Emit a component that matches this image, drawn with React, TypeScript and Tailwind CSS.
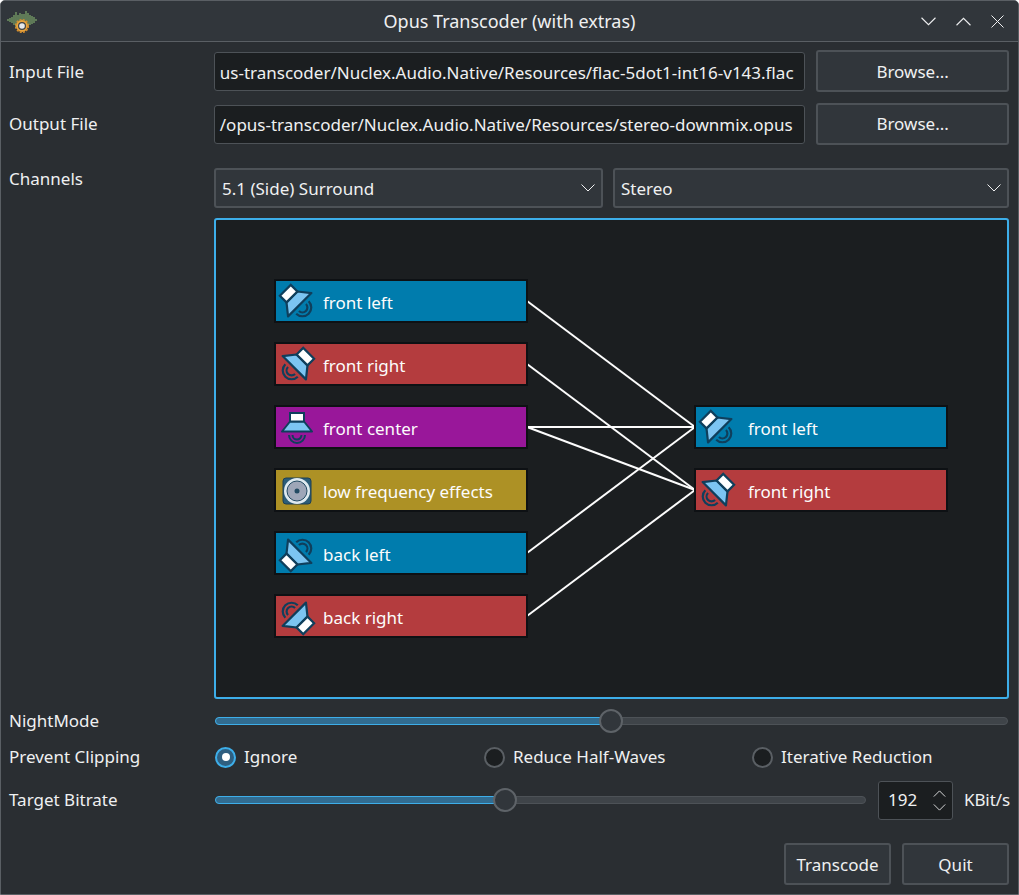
import type { ReactNode } from "react";

const font = "font-['Noto_Sans',sans-serif]";

function AppIcon() {
  const bars = [
    [1, 1], [3, 2], [5, 3], [7, 5], [9, 8], [11, 5], [13, 7], [15, 6], [17, 6], [19, 9],
    [21, 7], [23, 5], [25, 4], [27, 3], [29, 1],
  ];
  return (
    <svg width="30" height="26" viewBox="0 0 30 26">
      {bars.map(([x, h]) => (
        <line key={x} x1={x} y1={11 - h} x2={x} y2={11 + h} stroke="#7fa86c" strokeWidth="1.2" />
      ))}
      <circle cx="15" cy="17" r="5" fill="#3c4248" stroke="#e8a33c" strokeWidth="2" />
      <circle cx="15" cy="17" r="6.4" fill="none" stroke="#d58d2c" strokeWidth="1.4" strokeDasharray="2 1.35" />
      <circle cx="15" cy="17" r="2.8" fill="#e6e8ea" />
    </svg>
  );
}

function Chevron({ className, up }: { className?: string; up?: boolean }) {
  return (
    <svg viewBox="0 0 14 8" className={className} fill="none" stroke="#eff0f1" strokeWidth="1">
      <path d={up ? "M0.5 7.5 L7 1 L13.5 7.5" : "M0.5 0.5 L7 7 L13.5 0.5"} />
    </svg>
  );
}

function Button({ children, className }: { children: ReactNode; className: string }) {
  return (
    <button className={`h-[42px] rounded-[3px] border-2 border-[#4d5257] bg-[#31363b] text-[#eff0f1] ${className}`}>
      {children}
    </button>
  );
}

function TextBox({ value, className }: { value: string; className: string }) {
  return (
    <div className={`h-[39px] w-[592px] overflow-hidden whitespace-nowrap rounded-[3px] border border-[#4d5257] bg-[#1b1e20] pl-[5px] text-[#eff0f1] ${className}`}>
      {value}
    </div>
  );
}

function Combo({ label, className }: { label: string; className: string }) {
  return (
    <div className={`flex h-[40px] items-center justify-between rounded-[3px] border-2 border-[#4d5257] bg-[#31363b] pl-[6px] pr-[6px] text-[#eff0f1] ${className}`}>
      <span className="pt-[2px]">{label}</span>
      <Chevron className="h-[8px] w-[14px]" />
    </div>
  );
}

function Slider({ percent, className }: { percent: number; className: string }) {
  return (
    <div className={`relative h-[8px] shrink-0 rounded-full border border-[#4d5257] bg-[#3f4449] ${className}`}>
      <div className="-m-px h-[8px] rounded-full border border-[#3daee9] bg-[#326c90]" style={{ width: `${percent}%` }} />
      <div
        className="absolute top-1/2 h-[24px] w-[24px] -translate-x-1/2 -translate-y-1/2 rounded-full border-2 border-[#5e6368] bg-[#31363b]"
        style={{ left: `${percent}%` }}
      />
    </div>
  );
}

function Radio({ label, checked }: { label: string; checked?: boolean }) {
  return (
    <div className="flex items-center gap-[8px] text-[#eff0f1]">
      {checked ? (
        <span className="flex h-[21px] w-[21px] items-center justify-center rounded-full border-2 border-[#3daee9] bg-[#2f5f80]">
          <span className="h-[8px] w-[8px] rounded-full bg-white" />
        </span>
      ) : (
        <span className="h-[21px] w-[21px] rounded-full border-2 border-[#5a5f64] bg-[#1b1e20]" />
      )}
      <span>{label}</span>
    </div>
  );
}

// all the speakers are the same drawing, just turned around its middle
function Speaker({ className }: { className: string }) {
  return (
    <svg width="32" height="32" viewBox="0 0 32 32" className={`overflow-visible ${className}`}>
      <path d="M8 23 A8 8 0 0 0 24 23" fill="none" stroke="#0f3f5c" strokeWidth="2" />
      <path d="M11.5 23 A4.5 4.5 0 0 0 20.5 23" fill="none" stroke="#0f3f5c" strokeWidth="2" />
      <path d="M9 9.5 H23 L31 19.5 H1 Z" fill="#7cc5f2" stroke="#0f3f5c" strokeWidth="2" strokeLinejoin="round" />
      <rect x="9" y="1" width="14" height="8.5" fill="#ffffff" stroke="#0f3f5c" strokeWidth="2" />
    </svg>
  );
}

function Woofer() {
  return (
    <svg width="30" height="30" viewBox="0 0 30 30">
      <rect x="1" y="2" width="28" height="26" rx="3" fill="#2c5d78" stroke="#1d3f55" />
      <circle cx="15" cy="15" r="13" fill="#dfeaf0" />
      <circle cx="15" cy="15" r="10" fill="#9ea6b8" stroke="#234a63" strokeWidth="1" />
      <circle cx="15" cy="15" r="2.5" fill="#234a63" />
    </svg>
  );
}

type Node = { label: string; pos: string; color: string; icon: ReactNode; right?: boolean };

const blue = "bg-[#007cad]";
const red = "bg-[#b43c3e]";

const nodes: Node[] = [
  { label: "front left", pos: "left-[58px] top-[59px]", color: blue, icon: <Speaker className="-rotate-45 scale-110" /> },
  { label: "front right", pos: "left-[58px] top-[122px]", color: red, icon: <Speaker className="rotate-45 scale-110" /> },
  { label: "front center", pos: "left-[58px] top-[185px]", color: "bg-[#99179a]", icon: <Speaker className="rotate-0" /> },
  { label: "low frequency effects", pos: "left-[58px] top-[248px]", color: "bg-[#ad9125]", icon: <Woofer /> },
  { label: "back left", pos: "left-[58px] top-[311px]", color: blue, icon: <Speaker className="-rotate-[135deg] scale-110" /> },
  { label: "back right", pos: "left-[58px] top-[374px]", color: red, icon: <Speaker className="rotate-[135deg] scale-110" /> },
  { label: "front left", pos: "left-[478px] top-[185px]", color: blue, icon: <Speaker className="-rotate-45 scale-110" />, right: true },
  { label: "front right", pos: "left-[478px] top-[248px]", color: red, icon: <Speaker className="rotate-45 scale-110" />, right: true },
];

const wires = [
  [311, 81, 479, 207],
  [311, 144, 479, 270],
  [311, 207, 479, 207],
  [311, 207, 479, 270],
  [311, 333, 479, 207],
  [311, 396, 479, 270],
];

function Diagram() {
  return (
    <div className="relative h-[481px] w-[795px] rounded-[3px] border-2 border-[#3daee9] bg-[#1b1e20]">
      <svg className="absolute inset-0" width="791" height="477">
        {wires.map(([x1, y1, x2, y2], i) => (
          <line key={i} x1={x1} y1={y1} x2={x2} y2={y2} stroke="#fcfcfc" strokeWidth="2" />
        ))}
      </svg>
      {nodes.map((n, i) => (
        <div
          key={i}
          className={`absolute flex h-[44px] w-[254px] items-center border-2 border-[#0e1114] text-[#fcfcfc] ${n.pos} ${n.color}`}
        >
          <span className="ml-[5px] mt-[2px] flex w-[32px] justify-center">{n.icon}</span>
          <span className={`pt-[3px] ${n.right ? "ml-[15px]" : "ml-[10px]"}`}>{n.label}</span>
        </div>
      ))}
    </div>
  );
}

export default function App() {
  return (
    <div className={`${font} flex h-[895px] w-[1019px] flex-col overflow-hidden rounded-t-[5px] border border-[#5a5f64] bg-[#2a2e32] text-[17px] text-[#eff0f1]`}>
      {/* title bar */}
      <div className="relative flex h-[41px] shrink-0 items-center justify-center border-b border-[#5a5f64] bg-[#31363b]">
        <div className="absolute left-[6px] top-[8px]">
          <AppIcon />
        </div>
        <span className="text-[18px]">Opus Transcoder (with extras)</span>
        <div className="absolute right-[14px] top-[14px] flex items-center gap-[20px]">
          <Chevron className="h-[9px] w-[15px]" />
          <Chevron className="h-[9px] w-[15px]" up />
          <svg width="13" height="13" viewBox="0 0 13 13" stroke="#eff0f1" strokeWidth="1">
            <path d="M0.5 0.5 L12.5 12.5 M12.5 0.5 L0.5 12.5" />
          </svg>
        </div>
      </div>

      <div className="flex flex-1 flex-col pl-[8px] pr-[9px] pt-[8px]">
        <div className="flex h-[42px] items-center">
          <span className="w-[205px] pt-[2px]">Input File</span>
          <TextBox value="us-transcoder/Nuclex.Audio.Native/Resources/flac-5dot1-int16-v143.flac" className="leading-[39px]" />
          <Button className="ml-[11px] w-[193px] pt-[2px]">Browse...</Button>
        </div>
        <div className="mt-[11px] flex h-[42px] items-center">
          <span className="w-[205px]">Output File</span>
          <TextBox value="/opus-transcoder/Nuclex.Audio.Native/Resources/stereo-downmix.opus" className="leading-[38px]" />
          <Button className="ml-[11px] w-[193px]">Browse...</Button>
        </div>

        <div className="mt-[23px] flex">
          <span className="w-[205px] leading-[22px]">Channels</span>
          <div className="flex flex-col gap-[10px]">
            <div className="flex gap-[10px]">
              <Combo label="5.1 (Side) Surround" className="w-[389px]" />
              <Combo label="Stereo" className="w-[396px]" />
            </div>
            <Diagram />
          </div>
        </div>

        <div className="mt-[10px] flex h-[24px] items-center">
          <span className="w-[206px]">NightMode</span>
          <Slider percent={49.9} className="w-[793px]" />
        </div>
        <div className="mt-[12px] flex h-[24px] items-center">
          <span className="w-[206px]">Prevent Clipping</span>
          <div className="grid flex-1 grid-cols-[269px_268px_1fr]">
            <Radio label="Ignore" checked />
            <Radio label="Reduce Half-Waves" />
            <Radio label="Iterative Reduction" />
          </div>
        </div>
        <div className="mt-[11px] flex h-[40px] items-center">
          <span className="w-[206px] shrink-0">Target Bitrate</span>
          <Slider percent={44.6} className="w-[651px]" />
          <div className="relative ml-[12px] h-[39px] w-[75px] shrink-0 rounded-[3px] border border-[#4d5257] bg-[#1b1e20] pl-[9px] leading-[36px]">
            192
            <Chevron className="absolute right-[6px] top-[8px] h-[7px] w-[13px]" up />
            <Chevron className="absolute right-[6px] top-[22px] h-[7px] w-[13px]" />
          </div>
          <span className="ml-[11px] shrink-0 tracking-[-0.1px]">KBit/s</span>
        </div>

        <div className="mt-[23px] flex justify-end gap-[11px]">
          <Button className="w-[107px] pt-[2px]">Transcode</Button>
          <Button className="w-[107px] pt-[2px]">Quit</Button>
        </div>
      </div>
    </div>
  );
}
